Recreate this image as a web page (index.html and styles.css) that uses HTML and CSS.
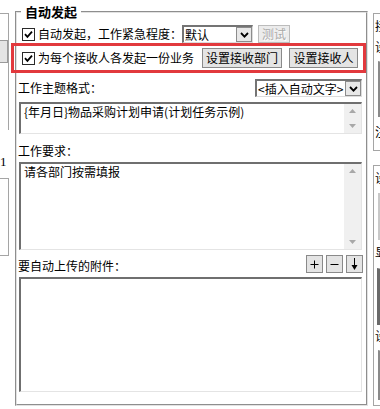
FILE: index.html
```html
<!DOCTYPE html>
<html lang="zh-CN">
<head>
    <meta charset="UTF-8">
    <title>自动发起</title>
    <link rel="stylesheet" href="styles.css">
</head>
<body>
<div class="side-left">
    <div class="stub-top">
        <div class="stub-btn"></div>
    </div>
    <div class="stub-char">1</div>
    <div class="stub-bottom"></div>
</div>

<fieldset class="group">
    <legend>自动发起</legend>
    <div class="row row-urgent">
        <span class="check"><svg width="9" height="9" viewBox="0 0 9 9"><path d="M1 4.2 L3.4 6.8 L8 1.6" fill="none" stroke="#000" stroke-width="1.8"/></svg></span>
        <span class="label">自动发起，工作紧急程度：</span>
        <div class="combo combo-level">
            <span class="combo-text">默认</span>
            <span class="combo-arrow"><svg width="9" height="6" viewBox="0 0 9 6"><path d="M1 1 L4.5 4.6 L8 1" fill="none" stroke="#000" stroke-width="1.8"/></svg></span>
        </div>
        <button class="btn btn-off">测试</button>
    </div>
    <div class="row row-each">
        <span class="check"><svg width="9" height="9" viewBox="0 0 9 9"><path d="M1 4.2 L3.4 6.8 L8 1.6" fill="none" stroke="#000" stroke-width="1.8"/></svg></span>
        <span class="label">为每个接收人各发起一份业务</span>
        <button class="btn btn-dept">设置接收部门</button>
        <button class="btn btn-user">设置接收人</button>
    </div>
    <div class="row row-title">
        <span class="label">工作主题格式：</span>
        <div class="combo combo-insert">
            <span class="combo-text">&lt;插入自动文字&gt;</span>
            <span class="combo-arrow"><svg width="9" height="6" viewBox="0 0 9 6"><path d="M1 1 L4.5 4.6 L8 1" fill="none" stroke="#000" stroke-width="1.8"/></svg></span>
        </div>
    </div>
    <div class="memo memo-title">
        <div class="memo-text">{年月日}物品采购计划申请(计划任务示例)</div>
        <div class="vscroll">
            <span class="arrow"><svg width="7" height="4" viewBox="0 0 7 4"><polygon points="3.5,0 7,4 0,4" fill="#a8a8a8"/></svg></span>
            <span class="arrow"><svg width="7" height="4" viewBox="0 0 7 4"><polygon points="0,0 7,0 3.5,4" fill="#a8a8a8"/></svg></span>
        </div>
    </div>
    <div class="caption">工作要求：</div>
    <div class="memo memo-req">
        <div class="memo-text">请各部门按需填报</div>
        <div class="vscroll">
            <span class="arrow"><svg width="7" height="4" viewBox="0 0 7 4"><polygon points="3.5,0 7,4 0,4" fill="#a8a8a8"/></svg></span>
            <span class="arrow"><svg width="7" height="4" viewBox="0 0 7 4"><polygon points="0,0 7,0 3.5,4" fill="#a8a8a8"/></svg></span>
        </div>
    </div>
    <div class="row row-attach">
        <span class="label">要自动上传的附件：</span>
        <div class="tool-btns">
            <button class="tool"><svg width="9" height="9" viewBox="0 0 9 9"><path d="M0.5 4.5 H8.5 M4.5 0.5 V8.5" stroke="#000" stroke-width="1"/></svg></button>
            <button class="tool"><svg width="9" height="9" viewBox="0 0 9 9"><path d="M0.5 4.5 H8.5" stroke="#000" stroke-width="1"/></svg></button>
            <button class="tool"><svg width="9" height="12" viewBox="0 0 9 12"><path d="M4.5 0 V9" stroke="#000" stroke-width="1"/><polygon points="1.5,7 7.5,7 4.5,12" fill="#000"/></svg></button>
        </div>
    </div>
    <div class="listbox"></div>
</fieldset>

<div class="side-right">
    <div class="rbox rbox-top">
        <div class="rchar">接</div>
        <div class="rchar rchar-2">设</div>
        <div class="redge redge-a"></div>
        <div class="rchar rchar-3">注</div>
    </div>
    <div class="rbox rbox-bottom">
        <div class="rchar rchar-4">设</div>
        <div class="redge redge-b"></div>
        <div class="rchar rchar-5">显</div>
        <div class="redge redge-c"></div>
        <div class="rchar rchar-6">设</div>
        <div class="redge redge-d"></div>
    </div>
</div>

<div class="highlight"></div>
</body>
</html>
```

FILE: styles.css
```css
*{
    margin: 0;
    padding: 0;
    box-sizing: border-box;
}
html,body{
    width: 380px;
    height: 409px;
    overflow: hidden;
}
body{
    position: relative;
    display: flex;
    align-items: flex-start;
    background-color: #fff;
    font-family: "Noto Sans CJK SC", "Liberation Sans", sans-serif;
    font-size: 12px;
    line-height: 16px;
    color: #000;
}

/* clipped panel on the left */
.side-left{
    width: 9px;
    margin-right: 6px;
    padding-top: 13px;
    flex-shrink: 0;
    display: flex;
    flex-direction: column;
}
.stub-top{
    height: 117px;
    padding-top: 26px;
    border-top: 1px solid #a5a5a5;
    border-right: 1px solid #a5a5a5;
}
.stub-btn{
    width: 8px;
    height: 23px;
    background-color: #e4e4e4;
    border: 1px solid #9a9a9a;
    border-left: none;
}
.stub-char{
    margin-top: 25px;
    line-height: 14px;
    font-family: "Liberation Serif", serif;
    font-size: 13px;
}
.stub-bottom{
    height: 78px;
    margin-top: 9px;
    border: 1px solid #a5a5a5;
    border-left: none;
}

/* main group */
.group{
    width: 353px;
    min-inline-size: 0;
    margin-top: 4px;
    padding: 5px 4px 12px 1px;
    border: 2px groove #e2e2e2;
    flex-shrink: 0;
}
.group legend{
    margin-left: 3px;
    padding: 0 4px;
    font-size: 13px;
    font-weight: bold;
    line-height: 16px;
}
.row{
    display: flex;
    align-items: center;
}
.label{
    white-space: nowrap;
}
.check{
    width: 13px;
    height: 13px;
    flex-shrink: 0;
    display: flex;
    align-items: center;
    justify-content: center;
    background-color: #fff;
    border: 1px solid #2a2a2a;
}
.check + .label{
    margin-left: 3px;
}
.row-urgent{
    height: 18px;
    padding-left: 4px;
}
.row-each{
    height: 20px;
    margin-top: 5px;
    padding-left: 4px;
}
.row-title{
    height: 18px;
    margin-top: 11px;
}

.combo{
    display: flex;
    height: 18px;
    background-color: #fff;
    border-top: 2px solid #747474;
    border-left: 2px solid #747474;
    border-right: 1px solid #dcdcdc;
    border-bottom: 1px solid #dcdcdc;
}
.combo-text{
    flex: 1;
    padding-left: 1px;
    line-height: 15px;
    white-space: nowrap;
}
.combo-arrow{
    width: 16px;
    display: flex;
    align-items: center;
    justify-content: center;
    background-color: #e8e8e8;
    border: 1px solid #8c8c8c;
}
.combo-level{
    width: 71px;
}
.combo-insert{
    width: 107px;
    margin-left: auto;
}

.btn{
    height: 20px;
    padding: 0;
    font-family: inherit;
    font-size: 12px;
    line-height: 16px;
    color: #000;
    background-color: #e4e4e4;
    border: 1px solid #8a8a8a;
}
.btn-off{
    width: 32px;
    height: 18px;
    margin-left: 5px;
    color: #a9a9a9;
    text-shadow: 1px 1px 0 #fff;
    background-color: #ececec;
    border-color: #bcbcbc;
}
.btn-dept{
    width: 80px;
    margin-left: 8px;
}
.btn-user{
    width: 69px;
    margin-left: 7px;
}

.memo{
    display: flex;
    margin-left: 1px;
    background-color: #fff;
    border-top: 2px solid #6f6f6f;
    border-left: 2px solid #6f6f6f;
    border-right: 1px solid #e4e4e4;
    border-bottom: 1px solid #e4e4e4;
}
.memo-title{
    height: 32px;
    margin-top: 5px;
}
.memo-req{
    height: 88px;
    margin-top: 3px;
}
.memo-text{
    flex: 1;
    padding: 0 3px;
    line-height: 15px;
    white-space: nowrap;
    overflow: hidden;
}
.vscroll{
    width: 17px;
    display: flex;
    flex-direction: column;
    justify-content: space-between;
    background-color: #f0f0f0;
}
.vscroll .arrow{
    height: 14px;
    display: flex;
    align-items: center;
    justify-content: center;
}

.caption{
    margin-top: 9px;
    line-height: 16px;
}

.row-attach{
    height: 18px;
    margin-top: 5px;
    align-items: flex-end;
}
.row-attach .label{
    line-height: 14px;
}
.tool-btns{
    display: flex;
    gap: 3px;
    margin-left: auto;
    margin-right: -1px;
}
.tool{
    width: 17px;
    height: 18px;
    display: flex;
    align-items: center;
    justify-content: center;
    background-color: #e4e4e4;
    border: 1px solid #8a8a8a;
}

.listbox{
    height: 115px;
    margin-top: 4px;
    margin-left: 1px;
    background-color: #fff;
    border-top: 2px solid #6f6f6f;
    border-left: 2px solid #6f6f6f;
    border-right: 1px solid #e4e4e4;
    border-bottom: 1px solid #e4e4e4;
}

/* clipped panel on the right */
.side-right{
    width: 7px;
    height: 409px;
    margin-left: 5px;
    padding-top: 13px;
    flex-shrink: 0;
    overflow: hidden;
}
.rbox{
    width: 20px;
    padding-left: 1px;
    border-top: 1px solid #a5a5a5;
    border-left: 1px solid #a5a5a5;
    border-bottom: 1px solid #a5a5a5;
}
.rbox-top{
    height: 138px;
    padding-top: 4px;
}
.rbox-bottom{
    height: 241px;
    margin-top: 14px;
}
.rchar{
    line-height: 16px;
    white-space: nowrap;
}
.rchar-2{ margin-top: 5px; }
.rchar-3{ margin-top: 7px; }
.rchar-4{ margin-top: 4px; }
.rchar-5{ margin-top: 4px; }
.rchar-6{ margin-top: 3px; }
.redge{
    margin-left: 3px;
    border-left: 2px solid #8a8a8a;
    border-top: 1px solid #c8c8c8;
}
.redge-a{ height: 56px; margin-top: 6px; }
.redge-b{ height: 47px; margin-top: 7px; border-left-color: #c8c8c8; }
.redge-c{ height: 57px; margin-top: 8px; margin-left: 2px; border-left: 3px solid #6a6a6a; }
.redge-d{ height: 50px; margin-top: 6px; }

/* red annotation frame */
.highlight{
    position: absolute;
    left: 11px;
    top: 43px;
    width: 355px;
    height: 30px;
    border: 3px solid #e2393d;
    pointer-events: none;
}
```
